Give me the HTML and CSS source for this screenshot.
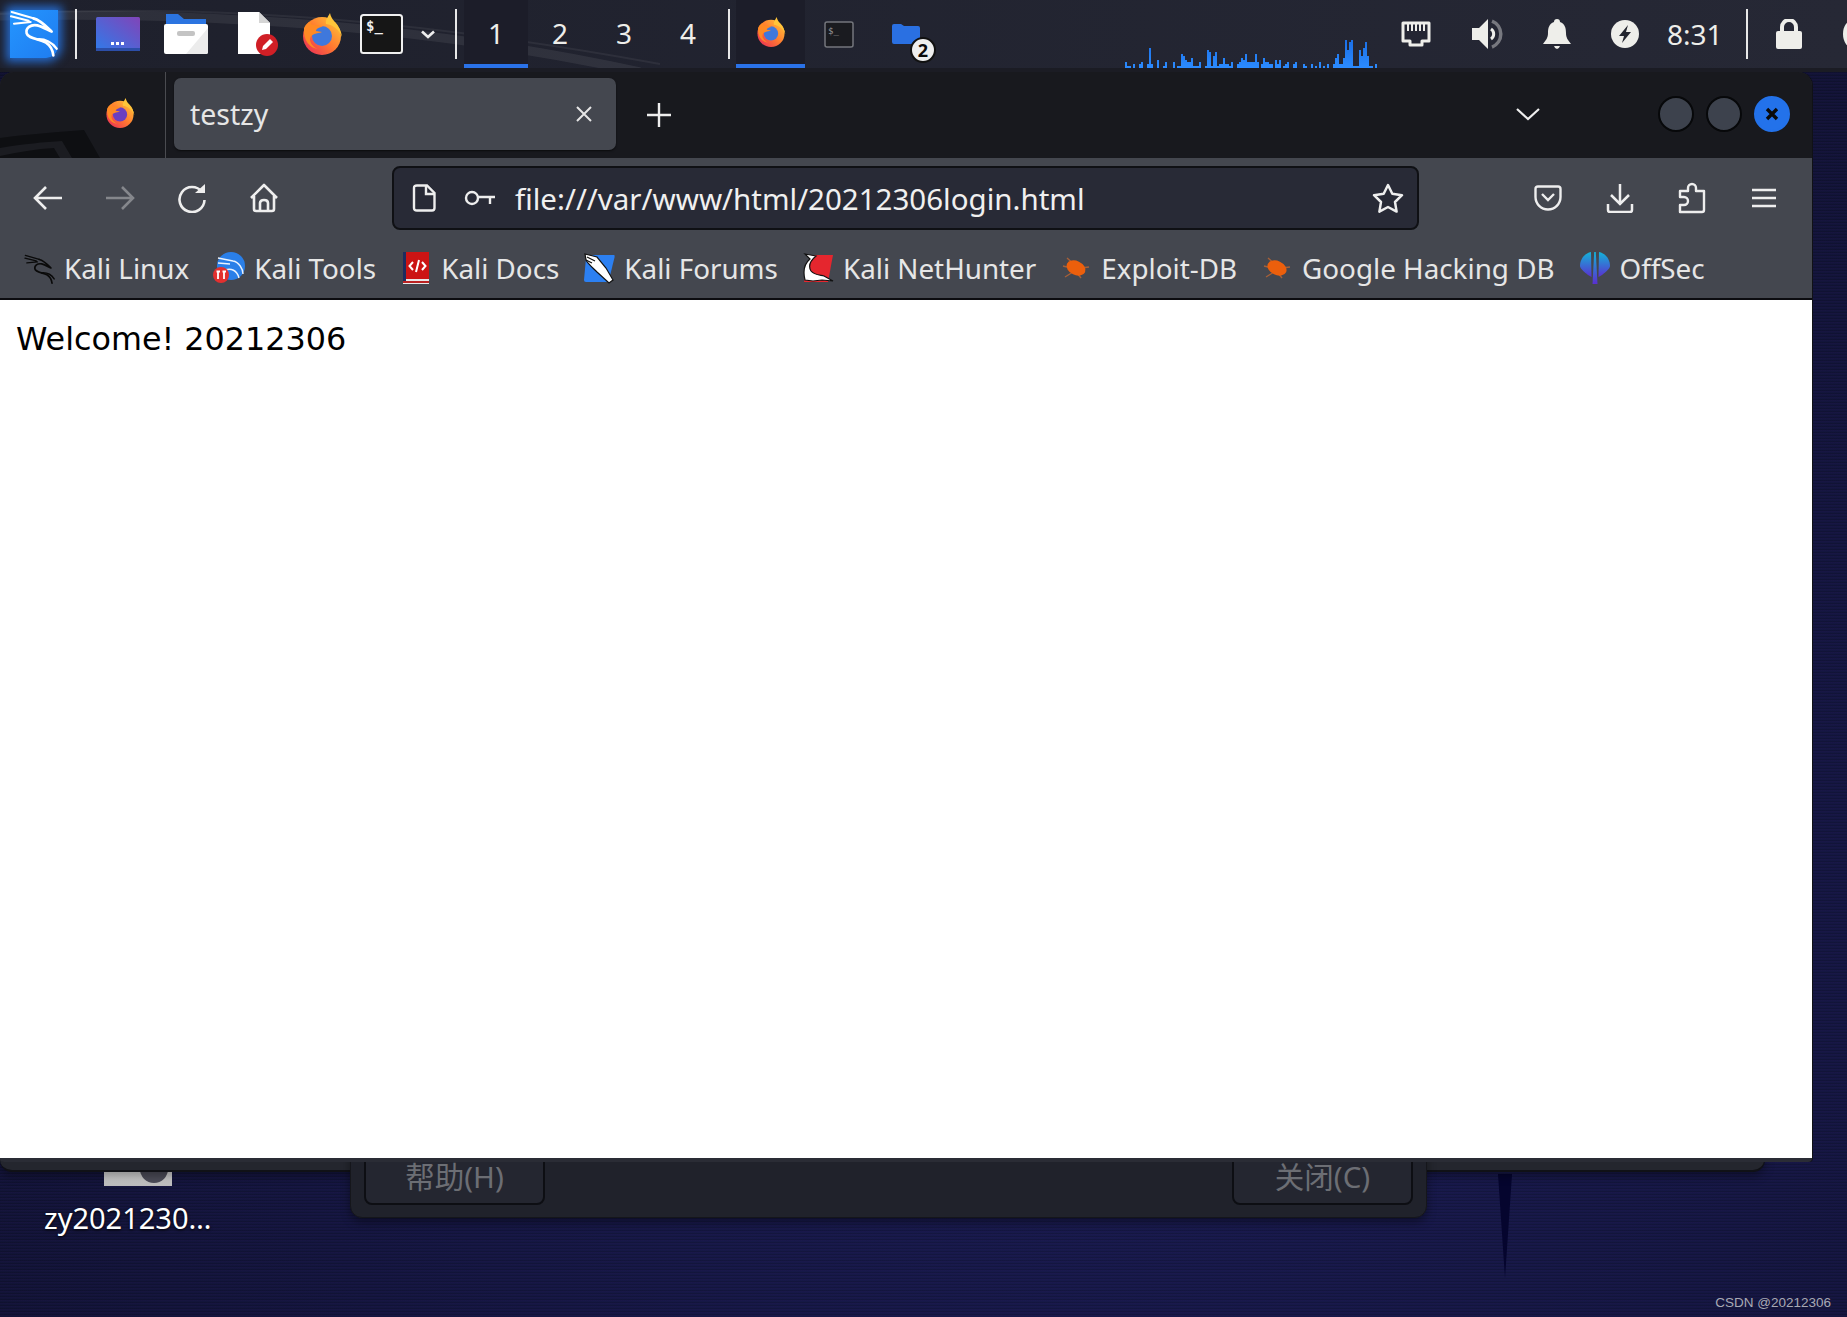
FILE: index.html
```html
<!DOCTYPE html>
<html>
<head>
  <meta charset="utf-8">
  <title>testzy</title>
  <link rel="stylesheet" href="styles.css">
</head>
<body>
  <!-- Shared icon shapes -->
  <svg class="icon-defs" width="0" height="0">
    <defs>
      <linearGradient id="menu-grad" x1="0" y1="1" x2="1" y2="0">
        <stop offset="0" stop-color="#2f7bea"/>
        <stop offset="1" stop-color="#8144b8"/>
      </linearGradient>
      <linearGradient id="ff-body" x1="1" y1="0" x2="0" y2="1">
        <stop offset="0" stop-color="#ffcf3a"/>
        <stop offset="0.5" stop-color="#ff7a30"/>
        <stop offset="1" stop-color="#e8245c"/>
      </linearGradient>
      <linearGradient id="graph-grad" x1="0" y1="0" x2="0" y2="1">
        <stop offset="0" stop-color="#1b6fe6"/>
        <stop offset="1" stop-color="#2b8bff"/>
      </linearGradient>
      <linearGradient id="offsec-grad" x1="0" y1="0" x2="0" y2="1">
        <stop offset="0" stop-color="#13b4d8"/>
        <stop offset="1" stop-color="#5a2fd0"/>
      </linearGradient>
      <symbol id="dragon" viewBox="0 0 174 174">
        <g fill="none" stroke="currentColor" stroke-linecap="round" stroke-linejoin="round">
          <path stroke-width="6" d="M35 36 L100 55 M33 49 L86 62 M42 71 L92 66"/>
          <path stroke-width="8" d="M100 55 C122 60 140 80 155 95 C140 88 128 80 112 76 C92 72 76 84 80 100 C84 116 116 116 138 128 C150 136 158 150 160 166"/>
          <path stroke-width="7" d="M112 118 C135 116 158 128 170 146"/>
        </g>
      </symbol>
      <symbol id="firefox" viewBox="0 0 42 42">
        <circle cx="21" cy="23" r="19" fill="url(#ff-body)"/>
        <path d="M29 0 C30 8 40 12 41 24 C38 16 32 12 25 11 C24 7 27 4 29 0Z" fill="#ffc53a"/>
        <circle class="ff-globe" cx="21" cy="23" r="10"/>
        <path d="M3 15 C5 11 7 9 10 8 C9 11 11 12 14 12 C18 12 21 13 22 14 C18 14 15 16 15 18 L21 19 C16 21 10 20 9 26 C9 30 12 34 17 36 C9 35 2 28 3 15Z" fill="#ff8a24"/>
      </symbol>
      <symbol id="bug" viewBox="0 0 30 30">
        <g stroke="#e8722a" stroke-width="1.4" opacity="0.6">
          <path d="M6 5 L14 12 M2 13 L10 15 M4 24 L12 19 M20 25 L16 20 M28 14 L20 15"/>
        </g>
        <ellipse cx="15" cy="15" rx="10" ry="7" transform="rotate(25 15 15)" fill="#ec5f0c"/>
      </symbol>
    </defs>
  </svg>

  <!-- Top Panel -->
  <header class="panel">
    <svg class="panel-swoosh" width="1847" height="68" viewBox="0 0 1847 68">
      <path d="M0 16 C200 12 420 24 640 72" fill="none" stroke="#ffffff" stroke-opacity="0.07" stroke-width="9"/>
      <path d="M0 14 C230 2 440 24 660 64" fill="none" stroke="#ffffff" stroke-opacity="0.06" stroke-width="2"/>
    </svg>

    <div class="kali-logo">
      <svg width="48" height="48" viewBox="30 30 144 144" class="kali-logo-mark"><use href="#dragon" width="174" height="174"/></svg>
    </div>
    <span class="panel-sep sep-first"></span>

    <svg class="launch launch-menu" width="44" height="34" viewBox="0 0 44 34">
      <rect width="44" height="34" rx="1.5" fill="url(#menu-grad)"/>
      <rect y="31" width="44" height="3" fill="#2c4ea8"/>
      <rect x="15" y="25" width="3" height="3" fill="#fff"/><rect x="20" y="25" width="3" height="3" fill="#fff"/><rect x="25" y="25" width="3" height="3" fill="#fff"/>
    </svg>
    <svg class="launch launch-files" width="44" height="40" viewBox="0 0 44 40">
      <path d="M2 0 H14 L20 5 H42 V14 H2Z" fill="#2b74e0"/>
      <rect y="10" width="44" height="30" rx="2" fill="#fff"/>
      <path d="M44 12 V38 Q44 40 42 40 H22 L44 14Z" fill="#ececec"/>
      <rect x="13" y="17" width="18" height="5" rx="2" fill="#c4c4c4"/>
    </svg>
    <svg class="launch launch-editor" width="41" height="44" viewBox="0 0 41 44">
      <path d="M1 0 H22 L33 11 V42 H1Z" fill="#fff"/>
      <path d="M22 0 L33 11 H22Z" fill="#d5d5d5"/>
      <circle cx="30" cy="33" r="11" fill="#d01f26"/>
      <path d="M25 38 L26 34 L33 27 L36 30 L29 37Z" fill="#fff"/>
    </svg>
    <svg class="launch launch-firefox ff-blue" width="42" height="42"><use href="#firefox"/></svg>
    <svg class="launch launch-term" width="43" height="40" viewBox="0 0 43 40">
      <rect x="1" y="1" width="41" height="38" rx="2.5" fill="#161616" stroke="#f0f0f0" stroke-width="2"/>
      <text x="6" y="17" class="term-prompt">$_</text>
    </svg>
    <svg class="launch launch-more" width="16" height="9" viewBox="0 0 16 9">
      <path d="M2 1.5 L8 7 L14 1.5" fill="none" stroke="#eee" stroke-width="2.6"/>
    </svg>
    <span class="panel-sep sep-mid"></span>

    <div class="workspaces">
      <div class="workspace workspace-active">1</div>
      <div class="workspace">2</div>
      <div class="workspace">3</div>
      <div class="workspace">4</div>
    </div>
    <span class="panel-sep sep-task"></span>

    <div class="task task-active">
      <svg class="ff-blue" width="30" height="32" viewBox="0 0 42 42"><use href="#firefox" width="42" height="42"/></svg>
    </div>
    <div class="task task-term">
      <svg width="30" height="27" viewBox="0 0 30 27">
        <rect x="1" y="1" width="28" height="25" rx="2" fill="#1a1b20" stroke="#74767c" stroke-width="1.5"/>
        <text x="4" y="13" class="term-prompt-small">$_</text>
      </svg>
    </div>
    <div class="task-folder">
      <svg width="28" height="20" viewBox="0 0 28 20">
        <path d="M0 2 Q0 0 2 0 H9 L12 2 H26 Q28 2 28 4 V18 Q28 20 26 20 H2 Q0 20 0 18Z" fill="#2a70e2"/>
      </svg>
      <span class="task-badge">2</span>
    </div>

    <svg class="cpu-graph" width="300" height="38" viewBox="0 0 900 114">
      <path fill="url(#graph-grad)" d="M78 114 V96 H84 V108 H96 V114 H102 V102 H108 V114 H120 V102 H126 V96 H132 V114 H144 V102 H150 V54 H156 V102 H162 V114 H174 V90 H180 V114 H192 V108 H198 V96 H204 V114 H222 V96 H228 V114 H234 V108 H246 V72 H252 V78 H258 V90 H264 V96 H276 V84 H282 V108 H300 V96 H306 V114 H318 V108 H324 V60 H330 V66 H336 V108 H342 V78 H348 V66 H354 V108 H360 V102 H372 V84 H378 V102 H390 V108 H396 V96 H402 V114 H414 V102 H420 V96 H426 V84 H432 V90 H438 V72 H444 V96 H468 V72 H474 V96 H480 V114 H486 V102 H492 V84 H498 V96 H510 V102 H522 V114 H528 V90 H534 V102 H540 V90 H546 V114 H552 V108 H558 V102 H564 V96 H570 V114 H582 V102 H588 V96 H594 V114 H612 V102 H618 V108 H624 V114 H636 V102 H642 V114 H648 V108 H654 V114 H660 V96 H666 V114 H672 V108 H678 V114 H684 V102 H690 V114 H702 V102 H708 V84 H714 V72 H720 V102 H732 V84 H738 V30 H744 V60 H750 V36 H756 V30 H762 V108 H780 V60 H786 V78 H792 V54 H798 V36 H804 V78 H810 V108 H822 V114 H828 V102 H834 V114Z"/>
    </svg>

    <svg class="tray tray-net" width="30" height="27" viewBox="0 0 30 27">
      <path d="M2 2 H28 V20 H21 V24 H9 V20 H2Z" fill="none" stroke="#eeeeea" stroke-width="3" stroke-linejoin="round"/>
      <path d="M7 3 V10 M11 3 V10 M15 3 V10 M19 3 V10 M23 3 V10" stroke="#eeeeea" stroke-width="2"/>
    </svg>
    <svg class="tray tray-sound" width="34" height="32" viewBox="0 0 34 32">
      <path d="M0 10 H7 L16 1 V31 L7 22 H0Z" fill="#eeeeea"/>
      <path d="M19 11 A6 6 0 0 1 19 21" fill="none" stroke="#eeeeea" stroke-width="3"/>
      <path d="M20 3 A14 14 0 0 1 20 29" fill="none" stroke="#77787f" stroke-width="3.5"/>
    </svg>
    <svg class="tray tray-bell" width="28" height="30" viewBox="0 0 28 30">
      <path d="M14 0 Q17 0 17 3 C22 5 23 9 23 14 C23 19 25 21 28 25 H0 C3 21 5 19 5 14 C5 9 6 5 11 3 Q11 0 14 0Z" fill="#eeeeea"/>
      <path d="M11 27 H17 Q16 30 14 30 Q12 30 11 27Z" fill="#eeeeea"/>
    </svg>
    <svg class="tray tray-power" width="28" height="28" viewBox="0 0 28 28">
      <circle cx="14" cy="14" r="14" fill="#eeeeea"/>
      <path d="M17 5 L8 16 H13 L11 23 L20 12 H15Z" fill="#23252f"/>
    </svg>
    <span class="clock">8:31</span>
    <span class="panel-sep sep-tray"></span>
    <svg class="tray tray-lock" width="26" height="30" viewBox="0 0 26 30">
      <path d="M6 13 V8 A7 7 0 0 1 20 8 V13" fill="none" stroke="#eeeeea" stroke-width="4"/>
      <rect y="12" width="26" height="18" rx="2" fill="#eeeeea"/>
    </svg>
    <span class="tray-edge"></span>
  </header>

  <!-- Desktop items behind the browser -->
  <div class="desktop-file"><span class="desktop-file-badge"></span></div>
  <div class="desktop-label">zy2021230…</div>
  <svg class="wallpaper-spike" width="14" height="104" viewBox="0 0 14 104"><path d="M0 0 H14 L7 104Z"/></svg>
  <div class="back-window"></div>
  <div class="dialog">
    <div class="dialog-button">帮助(H)</div>
    <div class="dialog-button">关闭(C)</div>
  </div>

  <!-- Browser Window -->
  <main class="browser">
    <div class="titlebar">
      <svg class="titlebar-art" width="110" height="28" viewBox="0 0 110 28">
        <path d="M0 8 C30 4 60 2 84 0 L100 28 H0Z" fill="#0e0f12"/>
        <path d="M0 18 C24 14 44 12 62 11 L72 28 H60 L54 18 C36 19 18 22 0 26Z" fill="#1b1c21"/>
      </svg>
      <svg class="title-firefox ff-purple" width="30" height="32" viewBox="0 0 42 42"><use href="#firefox" width="42" height="42"/></svg>
      <span class="title-divider"></span>
      <div class="tab">
        <span class="tab-title">testzy</span>
        <svg width="18" height="18" viewBox="0 0 18 18"><path d="M2 2 L16 16 M16 2 L2 16" stroke="#e6e6e6" stroke-width="2"/></svg>
      </div>
      <svg class="new-tab" width="26" height="26" viewBox="0 0 26 26"><path d="M13 1 V25 M1 13 H25" stroke="#eee" stroke-width="2.4"/></svg>
      <svg class="tab-list" width="26" height="14" viewBox="0 0 26 14"><path d="M2 2 L13 12 L24 2" fill="none" stroke="#eee" stroke-width="2.2"/></svg>
      <span class="win-btn"></span>
      <span class="win-btn"></span>
      <span class="win-btn win-btn-close">
        <svg width="16" height="16" viewBox="0 0 16 16"><path d="M3 3 L13 13 M13 3 L3 13" stroke="#0a0a0a" stroke-width="3.4"/></svg>
      </span>
    </div>

    <div class="toolbar">
      <div class="nav-row">
        <div class="nav-btn"><svg width="30" height="26" viewBox="0 0 30 26"><path d="M29 13 H2 M13 2 L2 13 L13 24" fill="none" stroke="#eee" stroke-width="2.6"/></svg></div>
        <div class="nav-btn"><svg width="30" height="26" viewBox="0 0 30 26"><path d="M1 13 H28 M17 2 L28 13 L17 24" fill="none" stroke="#85878c" stroke-width="2.6"/></svg></div>
        <div class="nav-btn"><svg width="30" height="30" viewBox="0 0 30 30"><path d="M25 9 A12.5 12.5 0 1 0 27.5 17" fill="none" stroke="#eee" stroke-width="2.6"/><path d="M18 10 H28 V1Z" fill="#eee"/></svg></div>
        <div class="nav-btn"><svg width="30" height="30" viewBox="0 0 30 30"><path d="M2 15 L15 2 L28 15 M5 13 V26 Q5 28 7 28 H23 Q25 28 25 26 V13 M11 28 V20 Q11 17 15 17 Q19 17 19 20 V28" fill="none" stroke="#eee" stroke-width="2.6" stroke-linejoin="round"/></svg></div>

        <div class="urlbar">
          <svg class="url-doc" width="24" height="28" viewBox="0 0 24 28"><path d="M5 1.5 H15 L22.5 9 V24 Q22.5 26.5 20 26.5 H5 Q2 26.5 2 24 V4 Q2 1.5 5 1.500Z" fill="none" stroke="#eee" stroke-width="2.4"/><path d="M14 1.5 V10 H22.5" fill="none" stroke="#eee" stroke-width="2.4"/></svg>
          <svg class="url-key" width="32" height="18" viewBox="0 0 32 18"><circle cx="8" cy="9" r="6" fill="none" stroke="#eee" stroke-width="2.4"/><path d="M14 8 H31 M26 8 V15" fill="none" stroke="#eee" stroke-width="2.4"/></svg>
          <span class="url-text">file:///var/www/html/20212306login.html</span>
          <svg class="url-star" width="32" height="31" viewBox="0 0 32 31"><path d="M16 2 L20.3 10.8 L30 12.2 L23 19 L24.6 28.6 L16 24 L7.4 28.6 L9 19 L2 12.2 L11.7 10.8Z" fill="none" stroke="#eee" stroke-width="2.5" stroke-linejoin="round"/></svg>
        </div>

        <div class="nav-btn nav-btn-first-right"><svg width="28" height="26" viewBox="0 0 28 26"><path d="M4 1.5 H24 Q26.5 1.5 26.5 4 V12 A12.5 12.5 0 0 1 1.5 12 V4 Q1.5 1.5 4 1.5Z M8 9 L14 15 L20 9" fill="none" stroke="#eee" stroke-width="2.4"/></svg></div>
        <div class="nav-btn"><svg width="28" height="30" viewBox="0 0 28 30"><path d="M14 1 V20 M5 12 L14 21 L23 12 M2 21 V27 Q2 29 4 29 H24 Q26 29 26 27 V21" fill="none" stroke="#eee" stroke-width="2.5"/></svg></div>
        <div class="nav-btn"><svg width="28" height="32" viewBox="0 0 28 32"><path d="M2 30 V23 H6 A4 4 0 0 0 6 15 H2 V9 H10 V6 A4 4 0 0 1 18 6 V9 H26 V28 Q26 30 24 30Z" fill="none" stroke="#eee" stroke-width="2.4" stroke-linejoin="round"/></svg></div>
        <div class="nav-btn"><svg width="26" height="20" viewBox="0 0 26 20"><path d="M1 2 H25 M1 10 H25 M1 18 H25" stroke="#eee" stroke-width="2.4"/></svg></div>
      </div>

      <div class="bookmarks">
        <div class="bookmark">
          <span class="fav"><svg class="fav-dragon" width="32" height="34" viewBox="24 20 150 150"><use href="#dragon" width="174" height="174"/></svg></span>Kali Linux
        </div>
        <div class="bookmark">
          <span class="fav">
            <svg width="32" height="32" viewBox="0 0 32 32">
              <circle cx="18" cy="14" r="14" fill="#2a7fe8"/>
              <path d="M5 6 L20 9 C26 10 30 17 30 22 M5 11 L17 12 M12 18 C18 16 24 18 26 26" fill="none" stroke="#eaf3ff" stroke-width="1.4"/>
              <circle cx="8" cy="23" r="8" fill="#e2302f"/>
              <path d="M5 19 V27 M11 19 V27 M3.5 19.5 H7 M9.5 19.5 H13" stroke="#fff" stroke-width="1.8"/>
            </svg>
          </span>Kali Tools
        </div>
        <div class="bookmark">
          <span class="fav">
            <svg width="26" height="32" viewBox="0 0 26 32">
              <rect width="26" height="32" fill="#e9e9e9"/>
              <rect x="3" width="23" height="27" fill="#cc1414"/>
              <rect width="3" height="29" fill="#1e2c5e"/>
              <rect y="29" width="26" height="2" fill="#b22"/>
              <path d="M10 10 L6.5 14 L10 18 M19 10 L22.5 14 L19 18 M16 8 L13 20" fill="none" stroke="#fff" stroke-width="2"/>
            </svg>
          </span>Kali Docs
        </div>
        <div class="bookmark">
          <span class="fav">
            <svg width="32" height="32" viewBox="0 0 32 32">
              <path d="M9 3 H31 Q32 3 31.6 5 L26 28 Q25 30 23 30 H3 Q1 30 1 28 L3 6Z" fill="#2c80f2"/>
              <path d="M2 2 L14 5 L23 16 L30 28 L26 31 L14 20 C10 16 5 12 3 8Z" fill="#fff" stroke="#111" stroke-width="1.2"/>
              <path d="M4 5 L12 9 M3 8 L9 11" stroke="#111" stroke-width="1.2"/>
            </svg>
          </span>Kali Forums
        </div>
        <div class="bookmark">
          <span class="fav">
            <svg width="32" height="32" viewBox="0 0 32 32">
              <path d="M8 3 H31 L26 30 H2Z" fill="#e5262e"/>
              <path d="M3 2 L14 4 C8 9 6 14 9 19 C12 23 18 23 22 24 L31 29 L20 28 L11 29 L3 28 C1 20 2 12 8 7Z" fill="#fff" stroke="#111" stroke-width="1.2"/>
            </svg>
          </span>Kali NetHunter
        </div>
        <div class="bookmark">
          <span class="fav"><svg class="fav-bug" width="30" height="30"><use href="#bug"/></svg></span>Exploit-DB
        </div>
        <div class="bookmark">
          <span class="fav"><svg class="fav-bug" width="30" height="30"><use href="#bug"/></svg></span>Google Hacking DB
        </div>
        <div class="bookmark">
          <span class="fav">
            <svg width="30" height="32" viewBox="0 0 30 32">
              <path d="M11 0 L11.500 25 L8 23 C3 19 0 16 0 14 C0 7 5 1 11 0Z" fill="url(#offsec-grad)"/>
              <path d="M19 0 L18.500 25 L22 23 C27 19 30 16 30 14 C30 7 25 1 19 0Z" fill="url(#offsec-grad)"/>
              <path d="M14.200 0 H15.800 L17.500 32 H12.500Z" fill="url(#offsec-grad)"/>
            </svg>
          </span>OffSec
        </div>
      </div>
    </div>

    <div class="page">
      <p class="welcome">Welcome! 20212306</p>
    </div>
  </main>

  <div class="watermark">CSDN @20212306</div>
</body>
</html>
```

FILE: styles.css
```css
/* Desktop */
html, body {
  margin: 0;
  height: 100%;
}
body {
  position: relative;
  width: 1847px;
  height: 1317px;
  overflow: hidden;
  font-family: "Noto Sans", "Noto Sans CJK SC", sans-serif;
  background:
    repeating-linear-gradient(180deg, rgba(0, 0, 0, 0.14) 0 1px, rgba(60, 20, 110, 0.08) 1px 2px, rgba(0, 0, 0, 0) 2px 3px),
    radial-gradient(ellipse at 60% 70%, #1a1d55 0%, #14163f 55%, #10122e 100%);
}
.icon-defs {
  position: absolute;
}

/* Top Panel */
.panel {
  position: relative;
  display: flex;
  align-items: center;
  height: 68px;
  border-bottom: 4px solid #1b1c24;
  background: linear-gradient(90deg, #1e202c, #262835);
  color: #eeeeea;
}
.panel-swoosh {
  position: absolute;
  left: 0;
  top: 0;
}
.panel > * {
  flex: none;
}
.kali-logo {
  position: relative;
  width: 48px;
  height: 48px;
  margin-left: 10px;
  border-radius: 0 0 12px 0;
  background: linear-gradient(135deg, #2496ff, #1f7cf0);
  box-shadow: 0 0 10px 4px rgba(40, 130, 255, 0.75);
  color: #fff;
}
.kali-logo-mark {
  display: block;
}
.panel-sep {
  width: 2px;
  height: 50px;
  background: #e8e8e8;
}
.sep-first {
  margin-left: 17px;
}
.sep-mid {
  margin-left: 19px;
}
.sep-task {
  margin-left: 8px;
}
.sep-tray {
  margin-left: 23px;
}
.launch {
  position: relative;
}
.launch-menu {
  margin-left: 19px;
}
.launch-files {
  margin-left: 24px;
}
.launch-editor {
  margin-left: 29px;
}
.launch-firefox {
  margin-left: 23px;
}
.launch-term {
  margin-left: 17px;
}
.launch-more {
  margin-left: 17px;
}
.term-prompt {
  font: bold 14px "DejaVu Sans Mono", monospace;
  fill: #f0f0f0;
}
.term-prompt-small {
  font: 9px "DejaVu Sans Mono", monospace;
  fill: #9a9a9a;
}

/* Workspaces and Tasks */
.workspaces {
  display: flex;
  margin-left: 7px;
}
.workspace {
  width: 64px;
  height: 68px;
  box-sizing: border-box;
  padding-top: 13px;
  text-align: center;
  font-size: 28px;
  line-height: 40px;
  position: relative;
}
.workspace-active {
  background: #1c1d29;
  border-bottom: 4px solid #2a72e8;
}
.task {
  position: relative;
  display: flex;
  align-items: center;
  justify-content: center;
  box-sizing: border-box;
  height: 68px;
}
.task-active {
  width: 69px;
  margin-left: 6px;
  background: #1c1d29;
  border-bottom: 4px solid #2a72e8;
}
.task-term {
  width: 30px;
  margin-left: 19px;
}
.task-folder {
  position: relative;
  width: 28px;
  height: 20px;
  margin-left: 38px;
}
.task-folder svg {
  display: block;
}
.task-badge {
  position: absolute;
  left: 18px;
  top: 13px;
  width: 22px;
  height: 22px;
  border: 2px solid #111;
  border-radius: 50%;
  background: #eee;
  color: #0a0a0a;
  font-size: 18px;
  font-weight: 700;
  line-height: 22px;
  text-align: center;
}
.cpu-graph {
  align-self: flex-end;
  margin-left: 179px;
}

/* System Tray */
.tray {
  position: relative;
}
.tray-net {
  margin-left: 2px;
}
.tray-sound {
  margin-left: 41px;
}
.tray-bell {
  margin-left: 37px;
}
.tray-power {
  margin-left: 40px;
}
.clock {
  position: relative;
  margin-left: 28px;
  font-size: 28px;
  line-height: 40px;
}
.tray-lock {
  margin-left: 28px;
}
.tray-edge {
  position: relative;
  width: 20px;
  height: 28px;
  margin-left: 41px;
  border-radius: 50%;
  background: #eeeeea;
}

/* Desktop Items */
.desktop-file {
  position: absolute;
  left: 104px;
  top: 1150px;
  width: 68px;
  height: 36px;
  background: linear-gradient(180deg, #f4f4f4, #bcbcbc);
}
.desktop-file-badge {
  position: absolute;
  right: 4px;
  bottom: 3px;
  width: 28px;
  height: 28px;
  border-radius: 50%;
  background: #4c4c58;
}
.desktop-label {
  position: absolute;
  left: 44px;
  top: 1198px;
  color: #fff;
  font-size: 29px;
  line-height: 40px;
  text-shadow: 0 1px 3px #000;
}
.wallpaper-spike {
  position: absolute;
  left: 1498px;
  top: 1174px;
  fill: #05052e;
}
.back-window {
  position: absolute;
  left: 0;
  top: 1100px;
  width: 1764px;
  height: 70px;
  border: 1px solid #101116;
  border-width: 0 1px 2px 0;
  border-radius: 0 0 12px 12px;
  background: #24262e;
  box-shadow: 0 4px 10px rgba(0, 0, 0, 0.35);
}
.dialog {
  position: absolute;
  left: 350px;
  top: 1100px;
  display: flex;
  align-items: flex-end;
  justify-content: space-between;
  box-sizing: border-box;
  width: 1077px;
  height: 118px;
  padding: 0 13px 12px;
  border: 1px solid #15161b;
  border-radius: 0 0 12px 12px;
  background: #20222b;
  box-shadow: 0 4px 10px rgba(0, 0, 0, 0.4);
}
.dialog-button {
  width: 181px;
  height: 55px;
  box-sizing: border-box;
  border: 2px solid #0d0e13;
  border-radius: 8px;
  background: #242630;
  color: #6c6e74;
  font-size: 29.5px;
  line-height: 50px;
  text-align: center;
}

/* Browser Window */
.browser {
  position: absolute;
  left: 0;
  top: 72px;
  display: flex;
  flex-direction: column;
  width: 1812px;
  height: 1090px;
  border-radius: 14px 14px 4px 4px;
  overflow: hidden;
  background: #2a2c35;
  box-shadow: 1px 0 0 #101116;
}
.titlebar {
  position: relative;
  display: flex;
  align-items: center;
  flex: none;
  height: 86px;
  background: #18191e;
}
.titlebar-art {
  position: absolute;
  left: 0;
  bottom: 0;
}
.title-firefox {
  position: relative;
  margin-left: 105px;
  margin-bottom: 4px;
}
.title-divider {
  align-self: stretch;
  width: 1px;
  margin-left: 30px;
  background: #4a4b50;
}
.tab {
  display: flex;
  align-items: center;
  justify-content: space-between;
  box-sizing: border-box;
  width: 442px;
  height: 72px;
  margin-left: 8px;
  margin-bottom: 2px;
  padding: 0 23px 0 16px;
  border-radius: 7px;
  background: #44474f;
  box-shadow: 0 1px 2px rgba(0, 0, 0, 0.6);
}
.tab-title {
  color: #e6e6e6;
  font-size: 28.5px;
}
.new-tab {
  margin-left: 30px;
}
.tab-list {
  margin-left: 843px;
  margin-bottom: 2px;
}
.win-btn {
  display: flex;
  align-items: center;
  justify-content: center;
  box-sizing: border-box;
  width: 36px;
  height: 36px;
  margin-left: 12px;
  margin-bottom: 2px;
  border: 2px solid #07080a;
  border-radius: 50%;
  background: #3d424d;
}
.tab-list + .win-btn {
  margin-left: 117px;
}
.win-btn-close {
  border-color: #2372ea;
  background: #2372ea;
}

/* Toolbar */
.toolbar {
  flex: none;
  height: 142px;
  box-sizing: border-box;
  border-bottom: 2px solid #0c0c10;
  background: #44474f;
}
.nav-row {
  display: flex;
  align-items: center;
  height: 80px;
  padding-left: 12px;
}
.nav-btn {
  display: flex;
  align-items: center;
  justify-content: center;
  width: 72px;
}
.urlbar {
  display: flex;
  align-items: center;
  box-sizing: border-box;
  width: 1027px;
  height: 64px;
  margin-left: 92px;
  padding: 0 13px 0 18px;
  border: 2px solid #0f1014;
  border-radius: 8px;
  background: #282a36;
}
.url-key {
  margin-left: 28px;
}
.url-text {
  flex: 1;
  margin-left: 19px;
  color: #f0f0f0;
  font-size: 29.5px;
  white-space: nowrap;
}
.nav-btn-first-right {
  margin-left: 93px;
}

/* Bookmarks */
.bookmarks {
  display: flex;
  align-items: center;
  gap: 24px;
  height: 60px;
  padding-left: 23px;
}
.bookmark {
  display: flex;
  align-items: center;
  color: #e6e6e6;
  font-size: 27.8px;
  white-space: nowrap;
}
.fav {
  display: flex;
  align-items: center;
  justify-content: center;
  width: 32px;
  height: 34px;
  margin-right: 9px;
}
.fav-dragon {
  color: #0a0a0a;
}
.fav-bug {
  filter: blur(0.6px);
}

/* Page Content */
.page {
  flex: none;
  height: 858px;
  background: #fff;
}
.welcome {
  margin: 0;
  padding: 19px 16px;
  color: #000;
  font-family: "DejaVu Sans", sans-serif;
  font-size: 31.8px;
  line-height: 40px;
}

/* Firefox Variants */
.ff-globe {
  fill: var(--globe);
}
.ff-blue {
  --globe: #3f78dc;
}
.ff-purple {
  --globe: #6a3fc0;
}
.watermark {
  position: absolute;
  right: 16px;
  bottom: 7px;
  color: #a8a9b5;
  font-family: "Liberation Sans", sans-serif;
  font-size: 13.5px;
}
```
